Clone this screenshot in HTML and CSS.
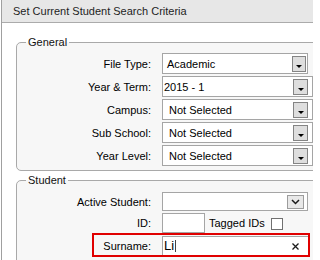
FILE: index.html
```html
<!DOCTYPE html>
<html>
<head>
<meta charset="utf-8">
<title>Set Current Student Search Criteria</title>
<link rel="stylesheet" href="styles.css">
</head>
<body>
<div class="panel">
  <div class="titlebar">Set Current Student Search Criteria</div>
  <div class="panel-body">
    <fieldset class="group group--general">
      <legend>General</legend>
      <div class="row">
        <span class="lbl">File Type:</span>
        <div class="select select--narrow">
          <span class="val val--academic">Academic</span>
          <span class="dd"><span class="tri"></span></span>
        </div>
      </div>
      <div class="row">
        <span class="lbl">Year &amp; Term:</span>
        <div class="select">
          <span class="val val--term">2015 - 1</span>
          <span class="dd"><span class="tri"></span></span>
        </div>
      </div>
      <div class="row">
        <span class="lbl">Campus:</span>
        <div class="select">
          <span class="val">Not Selected</span>
          <span class="dd"><span class="tri"></span></span>
        </div>
      </div>
      <div class="row">
        <span class="lbl">Sub School:</span>
        <div class="select">
          <span class="val">Not Selected</span>
          <span class="dd"><span class="tri"></span></span>
        </div>
      </div>
      <div class="row row--last">
        <span class="lbl">Year Level:</span>
        <div class="select">
          <span class="val">Not Selected</span>
          <span class="dd"><span class="tri"></span></span>
        </div>
      </div>
    </fieldset>

    <fieldset class="group group--student">
      <legend>Student</legend>
      <div class="row row--active">
        <span class="lbl">Active Student:</span>
        <div class="select select--active">
          <span class="val"></span>
          <span class="chev">
            <svg width="9" height="6" viewBox="0 0 9 6"><polyline points="1,1 4.5,4.5 8,1" fill="none" stroke="#1a1a1a" stroke-width="1.5"/></svg>
          </span>
        </div>
      </div>
      <div class="row row--id">
        <span class="lbl">ID:</span>
        <span class="input input--id"></span>
        <span class="tagged">Tagged IDs</span>
        <span class="cb"></span>
      </div>
      <div class="row row--surname">
        <span class="highlight"></span>
        <span class="lbl">Surname:</span>
        <span class="input input--surname">
          <span class="typed">Li</span><span class="caret"></span>
          <svg class="clear" width="7" height="7" viewBox="0 0 7 7"><path d="M0.5 0.5 L6.5 6.5 M6.5 0.5 L0.5 6.5" stroke="#1a1a1a" stroke-width="1.3" fill="none"/></svg>
        </span>
      </div>
    </fieldset>
  </div>
</div>
</body>
</html>
```

FILE: styles.css
```css
html, body {
  margin: 0;
  padding: 0;
  overflow: hidden;
  background: #ffffff;
}

body {
  width: 313px;
  height: 260px;
  font-family: "Liberation Sans", Arial, sans-serif;
  font-size: 11px;
  color: #000000;
}

.panel {
  margin-left: 1px;
  width: 340px;
  border-left: 1px solid #a0a0a0;
}

.titlebar {
  height: 22px;
  line-height: 22px;
  padding-left: 11px;
  background: #e7e7e7;
  border-bottom: 1px solid #ababab;
  color: #1e1e1e;
  white-space: nowrap;
}

.panel-body {
  padding: 13px 14px 0 14px;
}

.group {
  margin: 0;
  padding: 4px 0 4px 0;
  border: 1px solid #a9a9a9;
  border-radius: 5px;
  background: #f7f7f7;
  min-width: 0;
}

.group legend {
  margin-left: 9px;
  padding: 0 2px;
  height: 13px;
  line-height: 13px;
  color: #111111;
}

.group--student {
  margin-top: 3px;
  padding-top: 5px;
  padding-bottom: 20px;
}

.row {
  display: flex;
  align-items: center;
  margin-bottom: 2px;
  position: relative;
}

.row--last {
  margin-bottom: 0;
}

.lbl {
  flex: none;
  width: 134px;
  margin-right: 11px;
  text-align: right;
  white-space: nowrap;
}

.select {
  flex: none;
  box-sizing: border-box;
  width: 151px;
  height: 21px;
  border: 1px solid #a5a5a5;
  background: #ffffff;
  display: flex;
  align-items: center;
}

.select--narrow {
  width: 146px;
}

.val {
  padding-left: 6px;
  white-space: nowrap;
}

.val--academic {
  padding-left: 4px;
}

.val--term {
  padding-left: 1px;
}

.dd {
  flex: none;
  box-sizing: border-box;
  width: 15px;
  height: 16px;
  margin-left: auto;
  margin-right: 4px;
  border: 1px solid #848484;
  background: #dedede;
  display: flex;
  justify-content: center;
  align-items: flex-start;
  padding-top: 8px;
}

.select--narrow .dd {
  margin-right: 1px;
  width: 14px;
}

.tri {
  width: 0;
  height: 0;
  border-left: 3px solid transparent;
  border-right: 3px solid transparent;
  border-top: 3px solid #000000;
}

.select--active {
  width: 146px;
  height: 19px;
}

.chev {
  flex: none;
  box-sizing: border-box;
  width: 17px;
  height: 14px;
  margin-left: auto;
  margin-right: 3px;
  border: 1px solid #9c9c9c;
  background: #e8e8e8;
  display: flex;
  align-items: center;
  justify-content: center;
}

.chev svg {
  display: block;
}

.row--active {
  margin-bottom: 2px;
}

.row--id {
  margin-bottom: 3px;
}

.input {
  flex: none;
  box-sizing: border-box;
  height: 20px;
  border: 1px solid #a5a5a5;
  background: #ffffff;
}

.input--id {
  width: 43px;
}

.tagged {
  margin-left: 4px;
  white-space: nowrap;
}

.cb {
  flex: none;
  box-sizing: border-box;
  width: 12px;
  height: 12px;
  margin-left: 6px;
  margin-top: 2px;
  border: 1px solid #707070;
  background: #ffffff;
}

.input--surname {
  width: 148px;
  display: flex;
  align-items: center;
}

.typed {
  padding-left: 1px;
  font-size: 13px;
  line-height: 16px;
}

.caret {
  width: 0;
  height: 12px;
  margin-left: 1px;
  border-left: 1px solid #444444;
}

.clear {
  display: block;
  margin-left: auto;
  margin-right: 10px;
}

.highlight {
  position: absolute;
  left: 75px;
  top: -3px;
  width: 218px;
  height: 24px;
  box-sizing: border-box;
  border: 2px solid #e00000;
  pointer-events: none;
}
```
